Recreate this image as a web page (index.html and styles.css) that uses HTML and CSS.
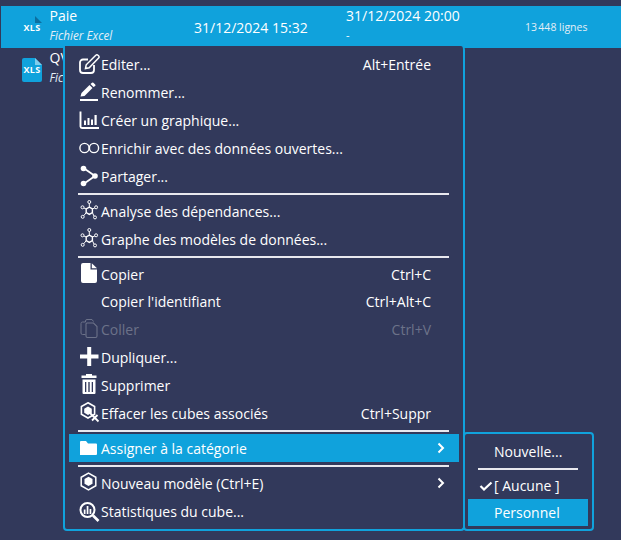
FILE: index.html
```html
<!DOCTYPE html>
<html lang="fr">
<head>
<meta charset="utf-8">
<title>Paie</title>
<link rel="stylesheet" href="styles.css">
</head>
<body>
<svg class="defs" width="0" height="0">
  <defs>
    <symbol id="net" viewBox="0 0 22 22">
      <g fill="none" stroke="currentColor" stroke-width="1">
        <path d="M10.300 7.200 13.400 9v3.600l-3.100 1.800-3.100-1.800V9z" stroke-width="1.400"/>
        <path d="M10.300 7V3.300M7.200 9 4.900 8M13.400 9 15.800 8M7.200 12.600 4.800 15.700M13.400 12.600 15 16.200"/>
        <circle cx="10.300" cy="2" r="1.500"/>
        <circle cx="3.500" cy="7.300" r="1.500"/><circle cx="17.100" cy="7.300" r="1.500"/>
        <circle cx="3.700" cy="16.800" r="1.500"/><circle cx="16" cy="17.400" r="1.500"/>
      </g>
    </symbol>
  </defs>
</svg>

<div class="list">
  <div class="row row-active">
    <div class="file-icon"><svg viewBox="0 0 20 24" width="20" height="24"><path class="fold-dark" d="M13 0v7h7z"/></svg><span class="xls">XLS</span></div>
    <div class="name-col"><div class="name">Paie</div><div class="type">Fichier Excel</div></div>
    <div class="date-col">31/12/2024 15:32</div>
    <div class="date2-col"><div class="date2">31/12/2024 20:00</div><div class="dash">-</div></div>
    <div class="lines">13&#8239;448 lignes</div>
  </div>
  <div class="row">
    <div class="file-icon"><svg viewBox="0 0 20 24" width="20" height="24"><path class="doc-blue" d="M2 0h11l7 7v15a2 2 0 0 1-2 2H2a2 2 0 0 1-2-2V2a2 2 0 0 1 2-2z"/><path class="fold-light" d="M13 0v7h7z"/></svg><span class="xls">XLS</span></div>
    <div class="name-col"><div class="name">QVD</div><div class="type">Fichier Excel</div></div>
  </div>
</div>

<div class="menu">
  <div class="item"><span class="ico"><svg viewBox="0 0 22 22" width="22" height="22"><path class="st" d="M9 6.500H4a3 3 0 0 0-3 3V17a3 3 0 0 0 3 3h8a3 3 0 0 0 3-3v-5" stroke-width="1.800"/><path class="st" d="M6.500 15.500l.7-3.700L16.800 2.200a1.500 1.500 0 0 1 2.200 0l.6.600a1.500 1.500 0 0 1 0 2.200L10.200 14.800z" stroke-width="1.500"/></svg></span><span class="label">Editer...</span><span class="key">Alt+Entrée</span></div>
  <div class="item"><span class="ico"><svg viewBox="0 0 22 22" width="22" height="22"><path class="fl" d="M1.500 15.500l1-3.500 8-8 3 3-8 8zM11.500 3l1.500-1.200a1 1 0 0 1 1.400 0l1.800 1.800a1 1 0 0 1 0 1.400L14.500 6z"/><rect class="fl" x="1" y="18" width="18" height="2"/></svg></span><span class="label">Renommer...</span></div>
  <div class="item"><span class="ico"><svg viewBox="0 0 22 22" width="22" height="22"><path class="st" d="M1.500 2.500v15a1.500 1.500 0 0 0 1.500 1.500h17" stroke-width="1.900"/><path class="fl" d="M5 11.500h2V16H5zM8.500 9h2v7h-2zM12 10.500h2V16h-2zM15.500 6h2.200v10h-2.200z"/></svg></span><span class="label">Créer un graphique...</span></div>
  <div class="item"><span class="ico"><svg viewBox="0 0 22 22" width="22" height="22"><circle class="st" cx="5.500" cy="11" r="4.600" stroke-width="1.400"/><circle class="st" cx="15" cy="11" r="4.600" stroke-width="1.400"/></svg></span><span class="label">Enrichir avec des données ouvertes...</span></div>
  <div class="item"><span class="ico"><svg viewBox="0 0 22 22" width="22" height="22"><path class="st" d="M4.500 3 16 11 4.500 19" stroke-width="1.800"/><circle class="fl" cx="4.500" cy="3.500" r="2.800"/><circle class="fl" cx="16" cy="11" r="2.800"/><circle class="fl" cx="4.500" cy="18.500" r="2.800"/></svg></span><span class="label">Partager...</span></div>
  <div class="sep"></div>
  <div class="item"><span class="ico"><svg width="22" height="22"><use href="#net"/></svg></span><span class="label">Analyse des dépendances...</span></div>
  <div class="item"><span class="ico"><svg width="22" height="22"><use href="#net"/></svg></span><span class="label">Graphe des modèles de données...</span></div>
  <div class="sep sep-tight"></div>
  <div class="item item-low"><span class="ico"><svg viewBox="0 1 22 22" width="22" height="22"><path class="fl" d="M4 1h7.500v6.500H18V19a2 2 0 0 1-2 2H4a2 2 0 0 1-2-2V3a2 2 0 0 1 2-2z"/><path class="fl" d="M12.800 1.200 18 6.300h-5.200z"/></svg></span><span class="label">Copier</span><span class="key">Ctrl+C</span></div>
  <div class="item"><span class="ico"></span><span class="label">Copier l'identifiant</span><span class="key">Ctrl+Alt+C</span></div>
  <div class="item item-off"><span class="ico"><svg viewBox="0 0 22 22" width="22" height="22"><path class="st" d="M6.500 4V3a1.500 1.500 0 0 1 1.500-1.500h5l1.500 2M6.500 16.500H3.500A1.500 1.500 0 0 1 2 15V5.500A1.500 1.500 0 0 1 3.500 4h3" stroke-width="1"/><path class="st" d="M7 6a1 1 0 0 1 1-1h6.500L18 8.500V18a1.500 1.500 0 0 1-1.500 1.500h-8A1.500 1.500 0 0 1 7 18z" stroke-width="1.100"/></svg></span><span class="label">Coller</span><span class="key">Ctrl+V</span></div>
  <div class="item"><span class="ico"><svg viewBox="0 0 22 22" width="22" height="22"><path class="fl" d="M8.200 1h4v7.500H19.500v4H12.200V20h-4v-7.500H1v-4h7.200z"/></svg></span><span class="label">Dupliquer...</span></div>
  <div class="item"><span class="ico"><svg viewBox="0 0 22 22" width="22" height="22"><path class="fl" d="M7 0h6v1.500h4.500v2.500h-15V1.500H7zM3.500 5.500h13V19a1 1 0 0 1-1 1h-11a1 1 0 0 1-1-1z"/><path class="notch" d="M6 8h1.300v10H6zM9.300 8h1.400v10H9.300zM12.700 8H14v10h-1.300z"/></svg></span><span class="label">Supprimer</span></div>
  <div class="item"><span class="ico"><svg viewBox="0 0 22 22" width="22" height="22"><path class="st" d="M9 .8 15.600 4.500v7.800L9 16 2.400 12.300V4.500z" stroke-width="1.600"/><path class="fl" d="M9 4.500l3.800 2.200v4L9 13l-3.800-2.300v-4z"/><path class="st" d="M11 11l8.500 8.500M18.500 13l-5.500 5.500" stroke-width="1.800"/></svg></span><span class="label">Effacer les cubes associés</span><span class="key">Ctrl+Suppr</span></div>
  <div class="sep"></div>
  <div class="item item-hot"><span class="ico"><svg viewBox="0 0 22 22" width="22" height="22"><path class="fl" d="M1 5a1 1 0 0 1 1-1h5l2 2.500h8a1 1 0 0 1 1 1V17a1 1 0 0 1-1 1H1z"/></svg></span><span class="label">Assigner à la catégorie</span><svg class="chev" viewBox="0 0 8 12" width="8" height="12"><path class="st" d="M1.500 1.500 6 6l-4.500 4.500" stroke-width="2"/></svg></div>
  <div class="sep"></div>
  <div class="item"><span class="ico"><svg viewBox="0 0 22 22" width="22" height="22"><path class="st" d="M9.500 1.200 16.800 5.300v8.400L9.500 17.800 2.200 13.700V5.300z" stroke-width="1.500"/><path class="fl" d="M9.500 4.800l4 2.300v4.600l-4 2.300-4-2.300V7.100z"/></svg></span><span class="label">Nouveau modèle (Ctrl+E)</span><svg class="chev" viewBox="0 0 8 12" width="8" height="12"><path class="st" d="M1.500 1.500 6 6l-4.500 4.500" stroke-width="2"/></svg></div>
  <div class="item"><span class="ico"><svg viewBox="0 0 22 22" width="22" height="22"><circle class="st" cx="8.500" cy="10" r="7" stroke-width="2"/><path class="fl" d="M4.800 9.500h1.700v4.500H4.800zM7.700 6h1.700v8H7.700zM10.600 9h1.700v5h-1.700z"/><path class="st" d="M14 15.500l5.500 5.500" stroke-width="2.600"/></svg></span><span class="label">Statistiques du cube...</span></div>
</div>

<div class="submenu">
  <div class="sub-item sub-new">Nouvelle...</div>
  <div class="sub-sep"></div>
  <div class="sub-item"><svg class="check" viewBox="0 0 14 10" width="14" height="10"><path class="st" d="M1.500 5 5 8.500 12.500 1.500" stroke-width="2.200"/></svg><span>[ Aucune ]</span></div>
  <div class="sub-item sub-hot">Personnel</div>
</div>
</body>
</html>
```

FILE: styles.css
```css
* { box-sizing: border-box; }
html, body { margin: 0; padding: 0; }
body {
  width: 621px;
  height: 540px;
  overflow: hidden;
  position: relative;
  background: #32395b;
  color: #fff;
  font-family: "Open Sans", "Noto Sans", sans-serif;
  font-size: 14px;
}
.defs { position: absolute; }
.st { fill: none; stroke: currentColor; }
.fl { fill: currentColor; }
.notch { fill: #32395b; }

.list { padding-top: 6px; }
.row {
  height: 42px;
  display: flex;
  align-items: center;
  padding-left: 22px;
}
.row-active { background: #10a2dc; margin-left: 1px; padding-left: 21px; }
.file-icon { position: relative; width: 20px; height: 24px; flex: none; margin-top: 2px; }
.file-icon svg { display: block; }
.doc-blue { fill: #10a2dc; }
.fold-light { fill: #7fcdec; }
.fold-dark { fill: #0b6f9f; }
.xls {
  position: absolute;
  left: 0;
  right: 0;
  top: 6px;
  text-align: center;
  font-size: 9px;
  line-height: 12px;
  font-weight: 700;
  letter-spacing: .3px;
}
.name-col { margin-left: 7.500px; width: 144.500px; flex: none; }
.name { font-size: 14px; line-height: 20px; margin-top: -4px; }
.type { font-size: 11.700px; font-style: italic; line-height: 18px; color: #e4eef6; }
.date-col { font-size: 14px; width: 152px; flex: none; }
.date2-col { width: 179px; flex: none; }
.date2 { font-size: 14px; line-height: 20px; margin-top: -4px; }
.dash { font-size: 11px; line-height: 18px; }
.lines { font-size: 10.500px; color: #e4eef6; }

.menu {
  position: absolute;
  left: 63px;
  top: 46px;
  width: 402px;
  height: 485px;
  background: #32395b;
  border: 2px solid #10a2dc;
  border-top: 0;
  border-radius: 0 4px 4px 4px;
  padding: 4px 0 0 4px;
}
.item {
  height: 28px;
  margin-right: 4px;
  display: flex;
  align-items: center;
  padding-right: 28px;
  white-space: nowrap;
}
.item-low { padding-top: 2px; }
.ico {
  width: 32px;
  height: 22px;
  flex: none;
  display: flex;
  align-items: center;
  justify-content: flex-end;
}
.ico svg { display: block; }
.label { flex: 1; font-size: 14px; }
.key { font-size: 14px; }
.item-off { color: #6c7289; }
.item-hot { background: #10a2dc; }
.chev { margin-right: -14px; }
.sep { height: 2px; background: #e8e8ee; margin: 3px 14px 2px 9px; }
.sep-tight { margin-bottom: 1px; }

.submenu {
  position: absolute;
  left: 463px;
  top: 432px;
  width: 131px;
  height: 99px;
  background: #32395b;
  border: 2px solid #10a2dc;
  border-radius: 4px;
  padding: 3px 4px 0 3px;
}
.sub-item {
  height: 27px;
  display: flex;
  align-items: center;
  padding-left: 26px;
  font-size: 14px;
  position: relative;
}
.sub-new { height: 28px; }
.sub-sep { height: 2px; background: #e8e8ee; margin: 3px 10px 2px; }
.check { position: absolute; left: 11px; top: 9px; }
.sub-hot { background: #10a2dc; }
```
